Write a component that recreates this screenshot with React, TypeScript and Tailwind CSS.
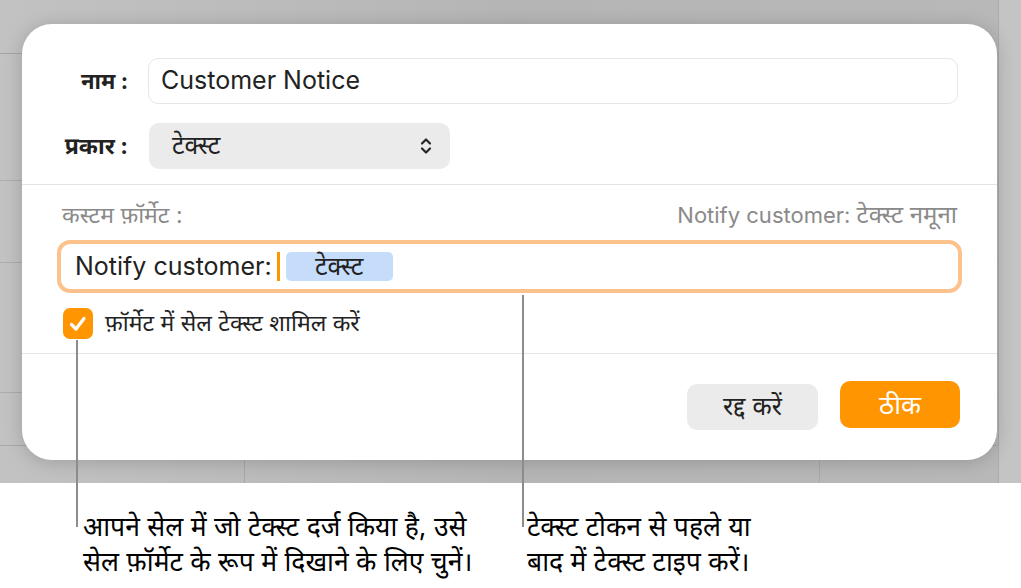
import React from 'react';

const FONT = { fontFamily: 'Inter, "Noto Sans", sans-serif' };

function UpDownChevron() {
  return (
    <svg width="14" height="20" viewBox="0 0 14 20" fill="none">
      <path d="M3 7.5 L7 3.5 L11 7.5" stroke="#262626" strokeWidth="2.2" strokeLinecap="round" strokeLinejoin="round" />
      <path d="M3 12.5 L7 16.5 L11 12.5" stroke="#262626" strokeWidth="2.2" strokeLinecap="round" strokeLinejoin="round" />
    </svg>
  );
}

function CheckMark() {
  return (
    <svg width="22" height="22" viewBox="0 0 22 22" fill="none">
      <path d="M4.5 11.5 L9 16 L17 5.5" stroke="white" strokeWidth="3.2" strokeLinecap="round" strokeLinejoin="round" />
    </svg>
  );
}

export default function App() {
  return (
    <div className="relative w-[1021px] h-[588px] overflow-hidden bg-white" style={FONT}>
      {/* Spreadsheet behind the sheet */}
      <div className="relative h-[483px] bg-gradient-to-r from-[#c2c2c2] via-[#b5b5b5] to-[#b8b8b8] pt-[24px] pl-[22px]">
        <div className="absolute inset-x-0 top-[53px] h-px bg-[#a3a3a3]" />
        <div className="absolute inset-x-0 top-[180px] h-px bg-[#acacac]" />
        <div className="absolute inset-x-0 top-[262px] h-px bg-[#acacac]" />
        <div className="absolute inset-x-0 top-[392px] h-px bg-[#acacac]" />
        <div className="absolute inset-x-0 top-[445px] h-px bg-[#a8a8a8]" />
        <div className="absolute top-[53px] bottom-0 left-[244px] w-px bg-[#a8a8a8]" />
        <div className="absolute top-[53px] bottom-0 left-[819px] w-px bg-[#a8a8a8]" />
        <div className="absolute top-0 bottom-0 right-0 w-[23px] bg-[#c4c4c4] border-l border-[#aaaaaa]" />

        {/* Dialog */}
        <div className="relative w-[975px] h-[436px] bg-white rounded-[30px] shadow-[0_2px_18px_rgba(0,0,0,0.18)] pt-[34px]">
          <div className="flex items-center">
            <div className="w-[106px] text-right text-[22px] font-bold text-[#222]">नाम :</div>
            <div className="ml-[20px] w-[810px] h-[46px] rounded-[10px] border border-[#e6e6e6] flex items-center pl-[12px] text-[25px] text-[#222]">
              Customer Notice
            </div>
          </div>
          <div className="flex items-center mt-[19px]">
            <div className="w-[106px] text-right text-[23px] font-bold text-[#222]">प्रकार :</div>
            <div className="ml-[21px] w-[301px] h-[46px] rounded-[10px] bg-[#ebebeb] flex items-center justify-between pl-[23px] pr-[17px] text-[25px] text-[#222]">
              <span>टेक्स्ट</span>
              <UpDownChevron />
            </div>
          </div>

          <div className="mt-[15px] border-t border-[#e3e3e3] px-[40px] pt-[18px]">
            <div className="flex justify-between items-center h-[24px] text-[22px] text-[#8a8a8a]">
              <span className="text-[23px]">कस्टम फ़ॉर्मेट :</span>
              <span>
                Notify customer: <span className="text-[24px]">टेक्स्ट नमूना</span>
              </span>
            </div>

            <div className="-mx-[5px] mt-[13px] h-[53px] rounded-[13px] border-[4px] border-[#fcc28e] flex items-center pl-[14px] text-[25px] text-[#222]">
              <span>Notify customer:</span>
              <span className="ml-[5px] w-[3px] h-[29px] bg-[#ff9500]" />
              <span className="ml-[6px] w-[107px] h-[29px] rounded-[5px] bg-[#c5dcfb] flex items-center justify-center text-[25px]">
                टेक्स्ट
              </span>
            </div>

            <div className="flex items-center h-[31px] mt-[15px] ml-[1px]">
              <div className="w-[30px] h-[31px] rounded-[7px] bg-[#ff9500] flex items-center justify-center">
                <CheckMark />
              </div>
              <span className="ml-[12px] text-[23px] text-[#222]">फ़ॉर्मेट में सेल टेक्स्ट शामिल करें</span>
            </div>
          </div>

          <div className="mt-[14px] border-t border-[#e3e3e3] flex justify-end items-start pt-[27px] pr-[37px]">
            <button className="mt-[3px] w-[131px] h-[46px] rounded-[10px] bg-[#ebebeb] text-[25px] text-[#222]">
              रद्द करें
            </button>
            <button className="ml-[22px] w-[120px] h-[47px] rounded-[10px] bg-[#ff9500] text-[26px] text-white">
              ठीक
            </button>
          </div>
        </div>
      </div>

      {/* Callout leader lines */}
      <div className="absolute left-[76px] top-[340px] w-[2px] h-[187px] bg-[#8c8c8c]" />
      <div className="absolute left-[522px] top-[295px] w-[2px] h-[232px] bg-[#8c8c8c]" />

      {/* Callout captions */}
      <div className="flex pt-[26px] text-[26.5px] leading-[35px] text-black">
        <div className="w-[527px] pl-[83px]">
          <div>आपने सेल में जो टेक्स्ट दर्ज किया है, उसे</div>
          <div>सेल फ़ॉर्मेट के रूप में दिखाने के लिए चुनें।</div>
        </div>
        <div>
          <div>टेक्स्ट टोकन से पहले या</div>
          <div>बाद में टेक्स्ट टाइप करें।</div>
        </div>
      </div>
    </div>
  );
}
